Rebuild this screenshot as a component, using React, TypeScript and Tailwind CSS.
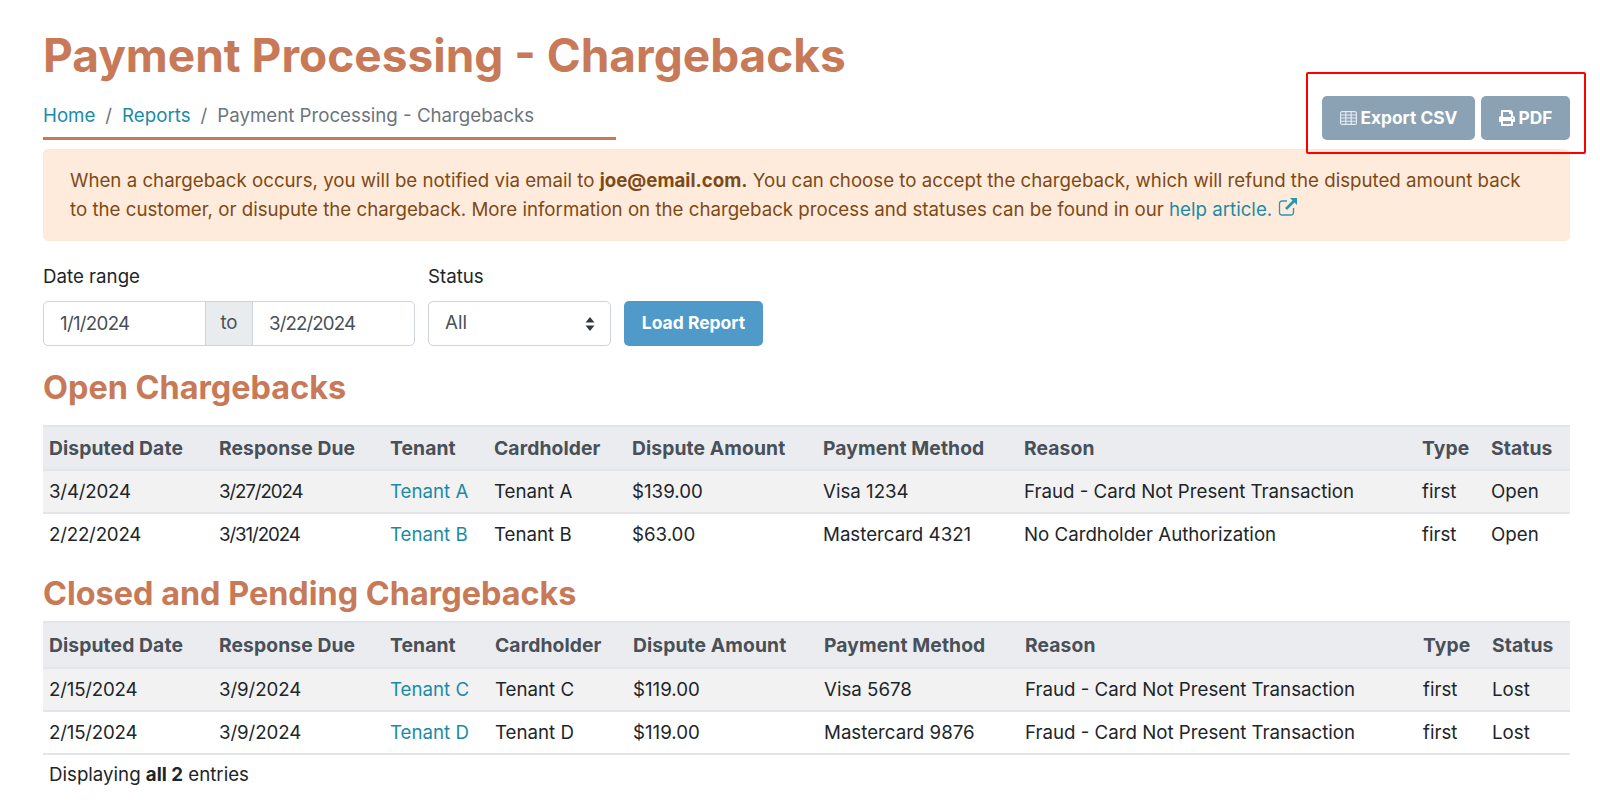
import React from 'react';
import { FaPrint } from 'react-icons/fa';

interface Chargeback {
  disputed: string;
  due: string;
  tenant: string;
  amount: string;
  method: string;
  reason: string;
  status: string;
}

const openRows: Chargeback[] = [
  { disputed: '3/4/2024', due: '3/27/2024', tenant: 'Tenant A', amount: '$139.00', method: 'Visa 1234', reason: 'Fraud - Card Not Present Transaction', status: 'Open' },
  { disputed: '2/22/2024', due: '3/31/2024', tenant: 'Tenant B', amount: '$63.00', method: 'Mastercard 4321', reason: 'No Cardholder Authorization', status: 'Open' },
];

const closedRows: Chargeback[] = [
  { disputed: '2/15/2024', due: '3/9/2024', tenant: 'Tenant C', amount: '$119.00', method: 'Visa 5678', reason: 'Fraud - Card Not Present Transaction', status: 'Lost' },
  { disputed: '2/15/2024', due: '3/9/2024', tenant: 'Tenant D', amount: '$119.00', method: 'Mastercard 9876', reason: 'Fraud - Card Not Present Transaction', status: 'Lost' },
];

const headers = ['Disputed Date', 'Response Due', 'Tenant', 'Cardholder', 'Dispute Amount', 'Payment Method', 'Reason', 'Type', 'Status'];

const ChargebackTable: React.FC<{ rows: Chargeback[]; closed?: boolean }> = ({ rows, closed }) => (
  <table className="w-full table-fixed border-collapse text-[18.7px] leading-[26px]">
    <colgroup>
      <col className="w-[170px]" />
      <col className="w-[171px]" />
      <col className={closed ? 'w-[105px]' : 'w-[104px]'} />
      <col className="w-[138px]" />
      <col className="w-[191px]" />
      <col className="w-[201px]" />
      <col className="w-[398px]" />
      <col className="w-[69px]" />
      <col />
    </colgroup>
    <thead>
      <tr className="border-y-2 border-[#e2e5ea] bg-[#eaecf0]">
        {headers.map(h => (
          <th key={h} className={`${closed ? 'h-[46px]' : 'h-[44px]'} whitespace-nowrap px-[6px] text-left text-[19.3px] font-bold tracking-[0.1px] text-[#495057]`}>{h}</th>
        ))}
      </tr>
    </thead>
    <tbody>
      {rows.map((row, i) => (
        <tr key={row.tenant} className={`${closed || i === 0 ? 'border-b-2 border-[#e2e5ea]' : ''} ${i === 0 ? 'bg-[#f2f2f3]' : ''}`}>
          <td className="h-[43px] whitespace-nowrap px-[6px] tracking-[-0.2px]">{row.disputed}</td>
          <td className={`whitespace-nowrap px-[6px] ${row.due.length > 8 ? 'tracking-[-1.1px]' : 'tracking-[-0.1px]'}`}>{row.due}</td>
          <td className="whitespace-nowrap px-[6px] text-[#1a8ba6]">{row.tenant}</td>
          <td className="whitespace-nowrap px-[6px]">{row.tenant}</td>
          <td className="whitespace-nowrap px-[6px]">{row.amount}</td>
          <td className="whitespace-nowrap px-[6px]">{row.method}</td>
          <td className="whitespace-nowrap px-[6px]">{row.reason}</td>
          <td className="whitespace-nowrap px-[6px]">first</td>
          <td className="whitespace-nowrap px-[6px]">{row.status}</td>
        </tr>
      ))}
    </tbody>
  </table>
);

export default function App() {
  return (
    <div className="relative min-h-screen bg-white pl-[43px] pr-[30px] pt-[23px] font-['Inter',sans-serif] text-[18.7px] text-[#212529]">
      {/* Header */}
      <div className="flex items-end justify-between">
        <div className="w-[573px] border-b-[3px] border-[#c77958] pb-[8px]">
          <h1 className="whitespace-nowrap text-[46px] font-bold leading-[64px] text-[#c77958]">Payment Processing - Chargebacks</h1>
          <nav className="mt-[16px] flex gap-[10px] whitespace-nowrap leading-[26px] text-[#6c757d]">
            <span className="text-[#1a8ba6]">Home</span>
            <span>/</span>
            <span className="text-[#1a8ba6]">Reports</span>
            <span>/</span>
            <span>Payment Processing - Chargebacks</span>
          </nav>
        </div>
        <div className="flex gap-[6px]">
          <button className="flex h-[44px] w-[153px] items-center justify-center gap-[4px] rounded-[5px] bg-[#8ba2b5] text-[17.3px] font-bold text-white">
            <svg viewBox="0 0 17 14" fill="none" stroke="currentColor" strokeWidth="1.1" className="h-[14px] w-[17px] opacity-80">
              <rect x="0.6" y="0.6" width="15.8" height="12.8" rx="1.5" />
              <path d="M0.6 4h15.8M0.6 7h15.8M0.6 10.2h15.8M5.8 0.6v12.8M11.2 0.6v12.8" />
            </svg>
            Export CSV
          </button>
          <button className="flex h-[44px] w-[89px] items-center justify-center gap-[4px] rounded-[5px] bg-[#8ba2b5] text-[17.3px] font-bold text-white">
            <FaPrint className="h-[16px] w-[16px]" />
            PDF
          </button>
        </div>
      </div>

      {/* Alert */}
      <div className="mt-[9px] rounded-[5px] border border-[#ffe8d6] bg-[#ffebdc] pb-[16px] pl-[26px] pr-[40px] pt-[16px] leading-[29px] text-[#7d4a16]">
        When a chargeback occurs, you will be notified via email to <b className="font-bold">joe@email.com.</b> You can choose to accept the chargeback, which will refund the disputed amount back to the customer, or disupute the chargeback. More information on the chargeback process and statuses can be found in our <span className="text-[#1a8ba6]">help article.</span>
        <svg viewBox="0 0 20 20" fill="none" className="ml-[6px] inline h-[20px] w-[20px] align-[-1px] text-[#2a96b0]">
          <path d="M9 4H4a2.5 2.5 0 0 0-2.5 2.5v9A2.5 2.5 0 0 0 4 18h9a2.5 2.5 0 0 0 2.5-2.5V11" stroke="currentColor" strokeWidth="1.3" />
          <path d="M8 12l8-8" stroke="currentColor" strokeWidth="2.6" />
          <path d="M12 1h7v7z" fill="currentColor" />
        </svg>
      </div>

      {/* Filters */}
      <div className="mt-[23px] flex items-end gap-[13px]">
        <div>
          <div className="mb-[11px] leading-[26px]">Date range</div>
          <div className="flex h-[45px] w-[372px] overflow-hidden rounded-[5px] border border-[#ced4da] text-[#495057]">
            <div className="flex w-[161px] items-center pl-[16px] pt-[1px] tracking-[-0.7px]">1/1/2024</div>
            <div className="flex w-[48px] items-center justify-center border-x border-[#ced4da] bg-[#e9ecef]">to</div>
            <div className="flex flex-1 items-center pl-[16px] pt-[1px] tracking-[-0.9px]">3/22/2024</div>
          </div>
        </div>
        <div>
          <div className="mb-[11px] leading-[26px]">Status</div>
          <div className="flex h-[45px] w-[183px] items-center justify-between rounded-[5px] border border-[#ced4da] pl-[16px] pr-[15px] text-[#495057]">
            All
            <svg viewBox="0 0 10 14" className="h-[14px] w-[10px] fill-[#343a40]">
              <path d="M5 0l4.5 5.5h-9z" />
              <path d="M5 14L.5 8.5h9z" />
            </svg>
          </div>
        </div>
        <button className="h-[45px] w-[139px] rounded-[5px] bg-[#4f9ac9] text-[17.5px] font-bold text-white">Load Report</button>
      </div>

      <h2 className="mb-[15px] mt-[20px] text-[32.4px] font-bold leading-[44px] text-[#c77958]">Open Chargebacks</h2>
      <ChargebackTable rows={openRows} />

      <h2 className="mb-[5px] mt-[16px] text-[32.4px] font-bold leading-[44px] text-[#c77958]">Closed and Pending Chargebacks</h2>
      <ChargebackTable rows={closedRows} closed />

      <div className="mt-[7px] pl-[6px] leading-[26px]">Displaying <b className="font-bold">all 2</b> entries</div>

      {/* Annotation drawn on top of the screenshot */}
      <div className="pointer-events-none absolute left-[1306px] top-[72px] h-[82px] w-[280px] rounded-[2px] border-[2px] border-[#ff0000]" />
    </div>
  );
}
